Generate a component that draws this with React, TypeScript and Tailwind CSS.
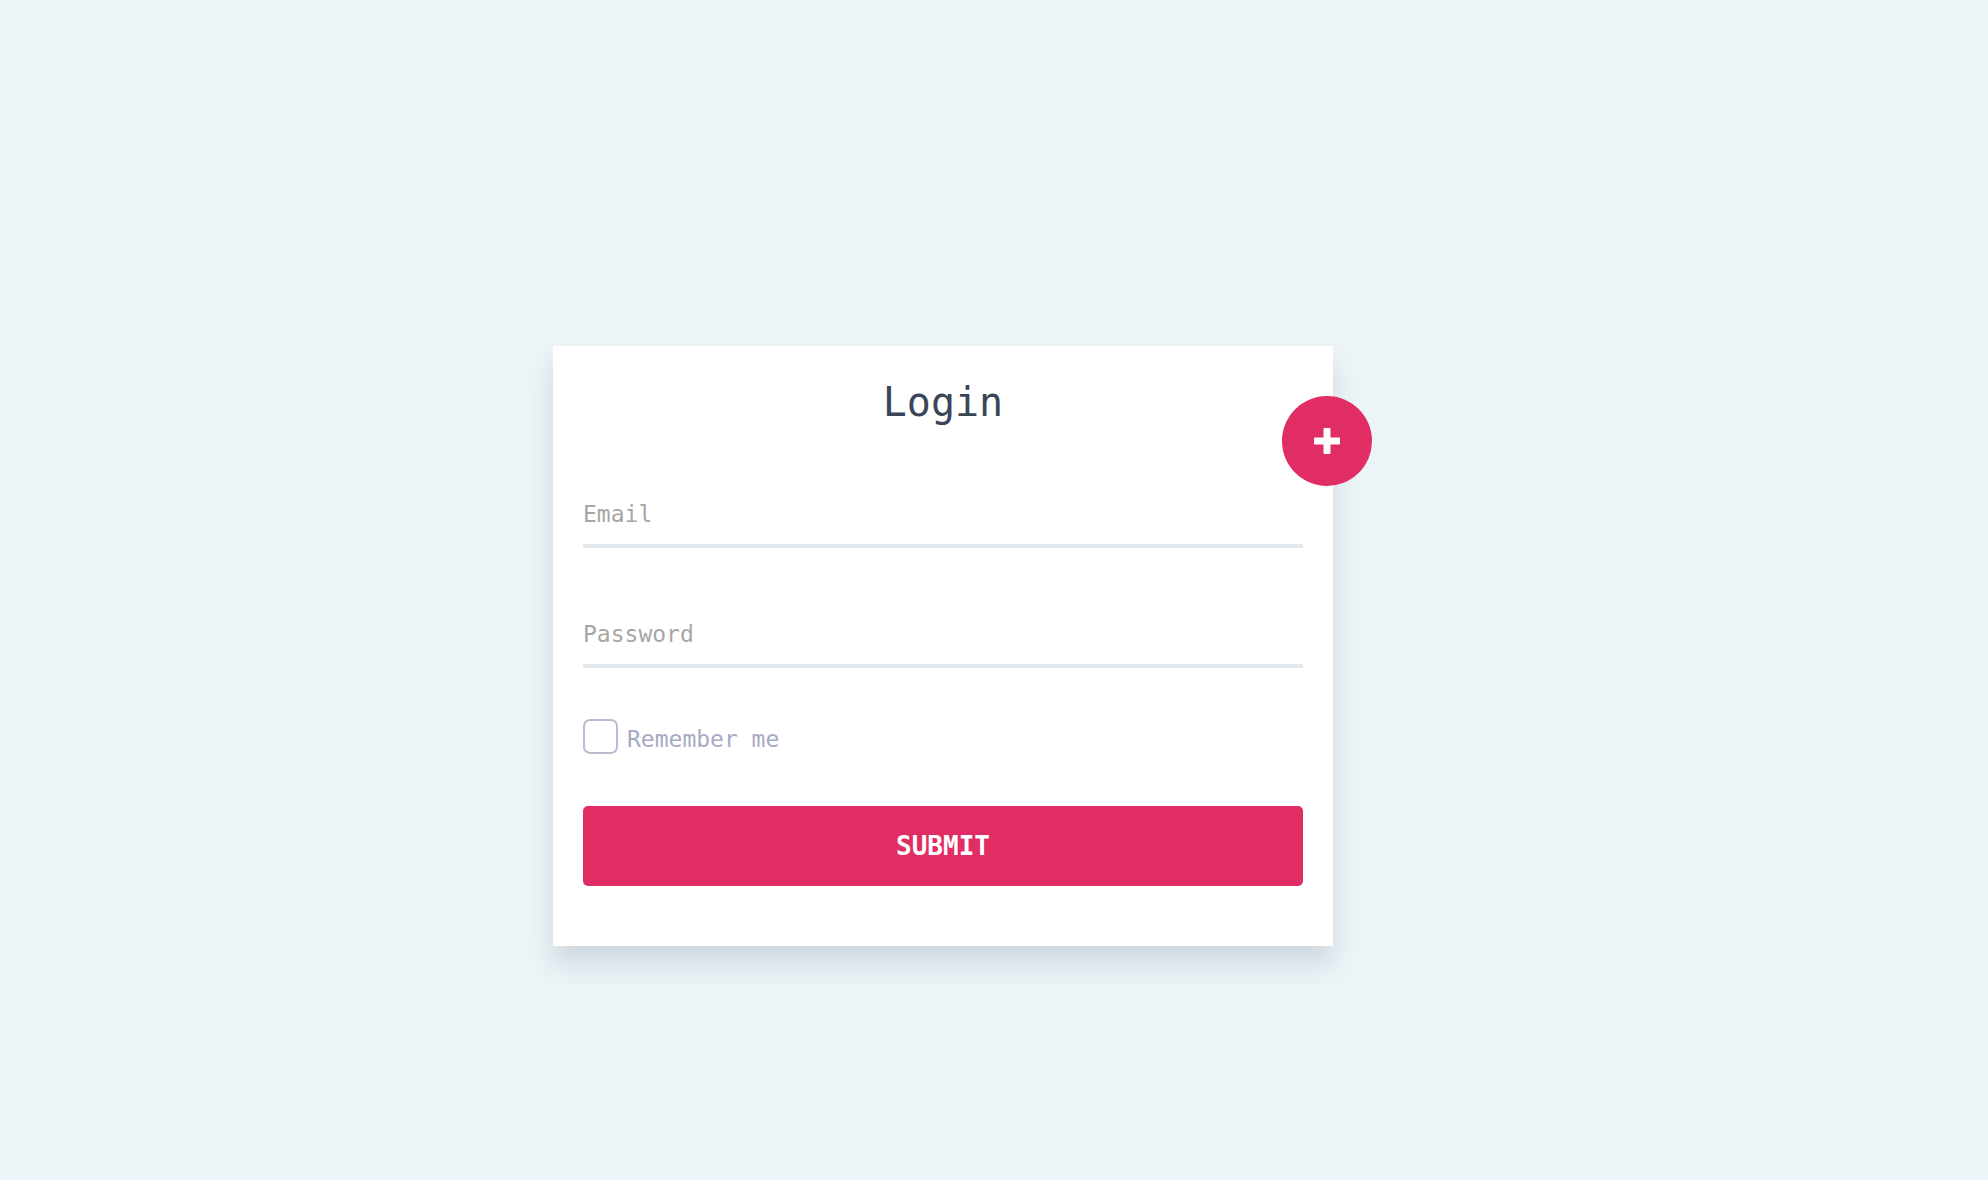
const mono = "font-['DejaVu_Sans_Mono','Liberation_Mono',monospace]";

const PlusIcon = () => (
  <svg width="26" height="26" viewBox="0 0 26 26" fill="#ffffff">
    <rect x="9.5" y="0" width="7" height="26" rx="1" />
    <rect x="0" y="9.5" width="26" height="7" rx="1" />
  </svg>
);

const App = () => {
  return (
    <div className={`min-h-screen w-full bg-[#edf4f8] pt-[346px] pl-[553px] ${mono}`}>
      {/* Card */}
      <div className="relative h-[600px] w-[780px] bg-white px-[30px] pt-[36px] shadow-[0_18px_24px_rgba(40,60,80,0.15)]">
        <h1 className="text-center text-[40px] leading-[40px] text-[#3a4658]">Login</h1>

        {/* Floating add button */}
        <button className="absolute left-[729px] top-[50px] flex h-[90px] w-[90px] items-center justify-center rounded-full bg-[#e02d63]">
          <PlusIcon />
        </button>

        <form className="flex flex-col">
          <input
            type="email"
            placeholder="Email"
            className="mt-[79px] block w-full border-b-4 border-[#e4e9ee] bg-transparent pb-[17px] text-[23px] leading-[23px] text-[#3a4658] outline-none placeholder:text-[#a7a6a4]"
          />
          <input
            type="password"
            placeholder="Password"
            className="mt-[73px] block w-full border-b-4 border-[#e4e9ee] bg-transparent pb-[17px] text-[23px] leading-[23px] text-[#3a4658] outline-none placeholder:text-[#a7a6a4]"
          />

          <label className="mt-[51px] flex items-end gap-[9px]">
            <span className="block h-[35px] w-[35px] rounded-[7px] border-2 border-[#b9bcd0] bg-white" />
            <span className="mb-[3px] text-[23px] leading-[23px] text-[#a7aac4]">Remember me</span>
          </label>

          <button
            type="button"
            className="mt-[52px] h-[80px] w-full rounded-[5px] bg-[#e02d63] text-[26px] font-bold text-white"
          >
            SUBMIT
          </button>
        </form>
      </div>
    </div>
  );
};

export default App;
